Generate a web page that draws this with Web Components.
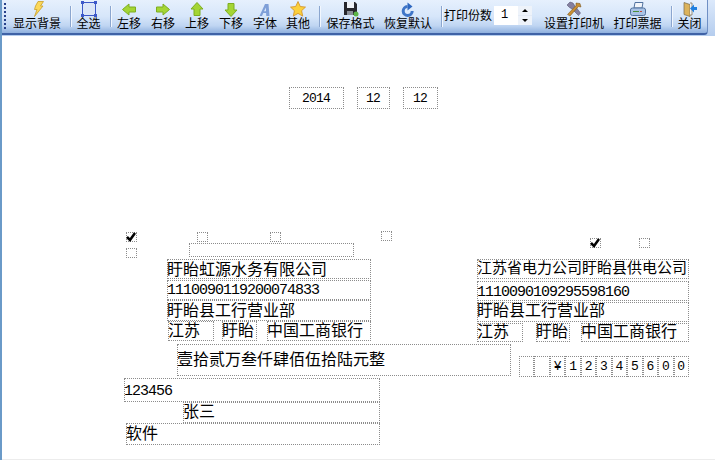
<!DOCTYPE html>
<html lang="zh">
<head>
<meta charset="utf-8">
<title>打印</title>
<style>
  html, body { margin: 0; height: 100%; background: #fff; overflow: hidden; }
  body { width: 715px; height: 460px; display: flex; flex-direction: column; font-family: "Noto Sans CJK SC", sans-serif; color: #000; }
</style>
</head>
<body>
<print-toolbar>
  <tool-button label="显示背景" width="56"><svg viewBox="0 0 16 16"><path d="M9 .5h5.500L11.500 5H14l-8.500 10.500L8 8.500H5.500L6.500 5z" fill="#fbd85a" stroke="#c9a02a" stroke-width=".8"/></svg></tool-button>
  <tool-sep></tool-sep>
  <tool-button label="全选" width="33"><svg viewBox="0 0 16 16"><rect x="1.500" y="1.500" width="13" height="13" fill="#dbe6f7" stroke="#3c58c8"/><g fill="#3c58c8"><rect x="0" y="0" width="3" height="3"/><rect x="13" y="0" width="3" height="3"/><rect x="0" y="13" width="3" height="3"/><rect x="13" y="13" width="3" height="3"/></g></svg></tool-button>
  <tool-sep></tool-sep>
  <tool-button label="左移" width="34"><svg viewBox="0 0 16 16"><path d="M1.500 8.500L8 3v3h6.500v5H8v3z" fill="#a4d534" stroke="#7dae20" stroke-linejoin="round"/></svg></tool-button>
  <tool-button label="右移" width="34"><svg viewBox="0 0 16 16"><path d="M14.500 8.500L8 3v3H1.500v5H8v3z" fill="#a4d534" stroke="#7dae20" stroke-linejoin="round"/></svg></tool-button>
  <tool-button label="上移" width="34"><svg viewBox="0 0 16 16"><path d="M8 1.500L2 8h3v6.500h6V8h3z" fill="#a4d534" stroke="#7dae20" stroke-linejoin="round"/></svg></tool-button>
  <tool-button label="下移" width="34"><svg viewBox="0 0 16 16"><path d="M8 15.500L2 9h3V2.500h6V9h3z" fill="#a4d534" stroke="#7dae20" stroke-linejoin="round"/></svg></tool-button>
  <tool-button label="字体" width="34"><svg viewBox="0 0 16 16"><path d="M2.500 15l5.500-12h3.500l1 12H9.300l-.2-3H6.300l-1.300 3zM7 10.200h2l-.2-3.800z" fill="#7e9fd8" fill-rule="evenodd"/></svg></tool-button>
  <tool-button label="其他" width="32"><svg viewBox="0 0 16 16"><path d="M8 .5l2.300 5 5.200.6-3.900 3.600 1.100 5.400L8 12.400l-4.700 2.700 1.100-5.400L.5 6.100l5.200-.6z" fill="#fbd03c" stroke="#d08e22" stroke-width=".8"/></svg></tool-button>
  <tool-sep></tool-sep>
  <tool-button label="保存格式" width="59"><svg viewBox="0 0 16 16"><path d="M1 1h11l2 2v11H1z" fill="#26262c"/><rect x="4" y="1" width="7" height="6" fill="#eef1f6"/><rect x="4" y="10" width="6" height="4" fill="#8a8f98"/><circle cx="13" cy="13" r="2.500" fill="#5cb548"/></svg></tool-button>
  <tool-button label="恢复默认" width="56"><svg viewBox="0 0 16 16"><path d="M7.500 5.500A4.500 4.500 0 1 0 12.200 10" fill="none" stroke="#3f76c8" stroke-width="3"/><path d="M7.500 1.500v8l5-4z" fill="#2f68c0"/></svg></tool-button>
  <tool-sep></tool-sep>
  <print-copies value="1"></print-copies>
  <tool-button label="设置打印机" width="62"><svg viewBox="0 0 16 16"><path d="M1 4l3-3 3 1 2 3 5.500 7-2 2.500L6 8 3.500 6.500z" fill="#85809f" stroke="#4a4668" stroke-width=".5"/><path d="M10 2l4 .5L15 6l-2.500-.5L4 15l-2.500-1.500 8.500-9z" fill="#c88f34" stroke="#6f4d18" stroke-width=".5"/></svg></tool-button>
  <tool-button label="打印票据" width="65"><svg viewBox="0 0 16 16"><path d="M5 1.500h8l-1 5.500H4z" fill="#f2f5fa" stroke="#51729f"/><rect x=".5" y="7" width="15" height="7.500" rx="2" fill="#a9c3e6" stroke="#51729f"/><rect x="3" y="10" width="6" height="1" fill="#4c8f3c"/><rect x="10" y="10" width="2" height="1" fill="#c04a3a"/></svg></tool-button>
  <tool-sep style="margin-left:1px"></tool-sep>
  <tool-button label="关闭" width="33"><svg viewBox="0 0 16 16"><path d="M2 1.500l6 2v12l-6-2z" fill="#dcb35c" stroke="#75684a" stroke-width=".7"/><path d="M8 2h2v12H8" fill="#eef1f6" stroke="#75684a" stroke-width=".7"/><path d="M8 7.500l4-4v2.500h3v3h-3v2.500z" fill="#1f7fe0"/></svg></tool-button>
</print-toolbar>

<print-canvas>
  <form-field x="289" y="87" w="55" h="22" align="center" digits="date" dy="2">2014</form-field>
  <form-field x="357" y="87" w="33" h="22" align="center" digits="date" dy="2">12</form-field>
  <form-field x="403" y="87" w="35" h="22" align="center" digits="date" dy="2">12</form-field>

  <form-check x="126" y="232" checked></form-check>
  <form-check x="197" y="232"></form-check>
  <form-check x="270" y="232"></form-check>
  <form-check x="381" y="231"></form-check>
  <form-check x="126" y="248"></form-check>
  <form-field x="189" y="243" w="165" h="14"></form-field>

  <form-field x="167" y="259" w="204" h="20" dy="1">盱眙虹源水务有限公司</form-field>
  <form-field x="167" y="280" w="204" h="20" digits="acct" dy="1">1110090119200074833</form-field>
  <form-field x="167" y="300" w="204" h="21" dy="1">盱眙县工行营业部</form-field>
  <form-field x="168" y="321" w="46" h="20">江苏</form-field>
  <form-field x="222" y="321" w="35" h="20">盱眙</form-field>
  <form-field x="267" y="321" w="104" h="20">中国工商银行</form-field>

  <form-check x="590" y="238" checked></form-check>
  <form-check x="639" y="238"></form-check>
  <form-field x="477" y="259" w="212" h="20" size="15" dy="-1">江苏省电力公司盱眙县供电公司</form-field>
  <form-field x="477" y="281" w="212" h="20" digits="acct" dy="2">1110090109295598160</form-field>
  <form-field x="477" y="302" w="212" h="20" dy="-1">盱眙县工行营业部</form-field>
  <form-field x="477" y="323" w="46" h="19" dy="-1">江苏</form-field>
  <form-field x="536" y="323" w="34" h="19" dy="-1">盱眙</form-field>
  <form-field x="581" y="323" w="108" h="19" dy="-1">中国工商银行</form-field>

  <form-field x="177" y="344" w="334" h="32" dy="6">壹拾贰万叁仟肆佰伍拾陆元整</form-field>
  <amount-cells x="519" y="356" values=",,¥,1,2,3,4,5,6,0,0"></amount-cells>

  <form-field x="124" y="378" w="256" h="24" digits="acct" dy="4">123456</form-field>
  <form-field x="183" y="402" w="197" h="21">张三</form-field>
  <form-field x="126" y="423" w="254" h="22" dy="1">软件</form-field>
</print-canvas>

<script>
// toolbar strip
class PrintToolbar extends HTMLElement {
  constructor() {
    super();
    this.attachShadow({ mode: "open" });
    this.shadowRoot.innerHTML = `
      <style>
        :host {
          display: block;
          flex: none;
          height: 36px;
          background: linear-gradient(#dce9fb, #b5cdee);
          font: 12px "Liberation Sans", "Noto Sans CJK SC", sans-serif;
          color: #000;
        }
        .bar {
          display: flex;
          align-items: flex-start;
          position: relative;
          width: 708px;
          height: 35px;
          box-sizing: border-box;
          padding-left: 9px;
          background: linear-gradient(#e6f0fd 0%, #d6e6fa 50%, #bfd5f2 78%, #8fb0de 100%);
          border-bottom: 2px solid #3f62a6;
          border-right: 1px solid #6f8fc4;
          border-radius: 0 0 4px 0;
        }
        .grip {
          position: absolute;
          left: 4px;
          top: 3px;
          width: 2px;
          height: 27px;
          background: repeating-linear-gradient(#27418b 0 2px, transparent 2px 4px);
        }
      </style>
      <div class="bar"><div class="grip"></div><slot></slot></div>`;
  }
}

class ToolButton extends HTMLElement {
  constructor() {
    super();
    this.attachShadow({ mode: "open" });
  }

  connectedCallback() {
    this.shadowRoot.innerHTML = `
      <style>
        :host {
          display: flex;
          flex: none;
          flex-direction: column;
          align-items: center;
          width: ${this.getAttribute("width")}px;
          height: 33px;
        }
        .icon { width: 16px; height: 16px; margin-top: 1px; }
        ::slotted(svg) { width: 16px; height: 16px; display: block; }
        .label { line-height: 14px; margin-top: 0; white-space: nowrap; }
      </style>
      <div class="icon"><slot></slot></div>
      <div class="label">${this.getAttribute("label")}</div>`;
  }
}

class ToolSep extends HTMLElement {
  constructor() {
    super();
    this.attachShadow({ mode: "open" });
    this.shadowRoot.innerHTML = `
      <style>
        :host {
          display: block;
          flex: none;
          width: 1px;
          height: 21px;
          margin: 6px 1px 0 5px;
          background: #8ba6cf;
          box-shadow: 1px 0 0 #f2f7fe;
        }
      </style>`;
  }
}

// 打印份数 + spinner
class PrintCopies extends HTMLElement {
  constructor() {
    super();
    this.attachShadow({ mode: "open" });
  }

  connectedCallback() {
    this.shadowRoot.innerHTML = `
      <style>
        :host {
          display: flex;
          flex: none;
          align-items: flex-start;
          gap: 2px;
          height: 30px;
          width: 99px;
          margin-left: 1px;
        }
        span { line-height: 14px; margin-top: 9px; }
        .spin { display: flex; width: 38px; height: 19px; background: #fff; margin-top: 6px; }
        .val { flex: 1; font: 12px/18px "Liberation Mono", monospace; padding-left: 7px; }
        .arrows { width: 14px; display: flex; flex-direction: column; background: #e4ebf6; gap: 1px; }
        .arrows i { flex: 1; display: flex; align-items: center; justify-content: center; background: #eef3fa; }
        .up { width: 0; height: 0; border: 3px solid transparent; border-top: 0; border-bottom-color: #000; }
        .down { width: 0; height: 0; border: 3px solid transparent; border-bottom: 0; border-top-color: #000; }
      </style>
      <span>打印份数</span>
      <div class="spin">
        <div class="val">${this.getAttribute("value")}</div>
        <div class="arrows"><i><b class="up"></b></i><i><b class="down"></b></i></div>
      </div>`;
  }
}

class PrintCanvas extends HTMLElement {
  constructor() {
    super();
    this.attachShadow({ mode: "open" });
    this.shadowRoot.innerHTML = `
      <style>
        :host {
          display: block;
          position: absolute;
          inset: 0;
          box-shadow: inset 2px 0 0 #6a9ac8, inset 0 -1px 0 #ececec;
          pointer-events: none;
        }
      </style>
      <slot></slot>`;
  }
}

// dotted box of the print form, its place on the sheet is the content
class FormField extends HTMLElement {
  constructor() {
    super();
    this.attachShadow({ mode: "open" });
  }

  connectedCallback() {
    const digits = this.getAttribute("digits");
    const size = this.getAttribute("size") || 16;
    const font = digits === "acct"
      ? 'font: 15px/18px "Liberation Mono", monospace; letter-spacing: -1px;'
      : digits === "date"
        ? 'font: 13px/18px "Liberation Mono", monospace; letter-spacing: -.8px;'
        : `font: ${size}px/17px "Liberation Sans", "Noto Sans CJK SC", sans-serif;`;
    this.shadowRoot.innerHTML = `
      <style>
        :host {
          position: absolute;
          left: ${this.getAttribute("x")}px;
          top: ${this.getAttribute("y")}px;
          width: ${this.getAttribute("w")}px;
          height: ${this.getAttribute("h")}px;
          box-sizing: border-box;
          border: 1px dotted #8c8c8c;
          display: flex;
          align-items: flex-start;
          justify-content: ${this.getAttribute("align") === "center" ? "center" : "flex-start"};
          white-space: nowrap;
          ${font}
          color: #000;
        }
        .t { margin: ${this.getAttribute("dy") || 0}px 0 0 -1px; }
      </style>
      <div class="t"><slot></slot></div>`;
  }
}

class FormCheck extends HTMLElement {
  constructor() {
    super();
    this.attachShadow({ mode: "open" });
  }

  connectedCallback() {
    const mark = this.hasAttribute("checked")
      ? `<svg viewBox="0 0 10 10" width="10" height="10"><path d="M1 5l3 3 5-7" fill="none" stroke="#000" stroke-width="2.500"/></svg>`
      : "";
    this.shadowRoot.innerHTML = `
      <style>
        :host {
          position: absolute;
          left: ${this.getAttribute("x")}px;
          top: ${this.getAttribute("y")}px;
          width: 11px;
          height: 10px;
          box-sizing: border-box;
          border: 1px dotted #8c8c8c;
        }
        svg { display: block; margin: -1px; }
      </style>
      ${mark}`;
  }
}

// 小写金额, one dotted cell per digit
class AmountCells extends HTMLElement {
  constructor() {
    super();
    this.attachShadow({ mode: "open" });
  }

  connectedCallback() {
    const cells = this.getAttribute("values").split(",")
      .map((v) => `<div class="cell">${v}</div>`).join("");
    this.shadowRoot.innerHTML = `
      <style>
        :host {
          position: absolute;
          left: ${this.getAttribute("x")}px;
          top: ${this.getAttribute("y")}px;
          width: 170px;
          height: 21px;
          display: grid;
          grid-template-columns: repeat(11, 1fr);
        }
        .cell {
          box-sizing: border-box;
          border: 1px dotted #8c8c8c;
          font: 13px/19px "Liberation Mono", monospace;
          text-align: center;
        }
      </style>
      ${cells}`;
  }
}

customElements.define("print-toolbar", PrintToolbar);
customElements.define("tool-button", ToolButton);
customElements.define("tool-sep", ToolSep);
customElements.define("print-copies", PrintCopies);
customElements.define("print-canvas", PrintCanvas);
customElements.define("form-field", FormField);
customElements.define("form-check", FormCheck);
customElements.define("amount-cells", AmountCells);
</script>
</body>
</html>
